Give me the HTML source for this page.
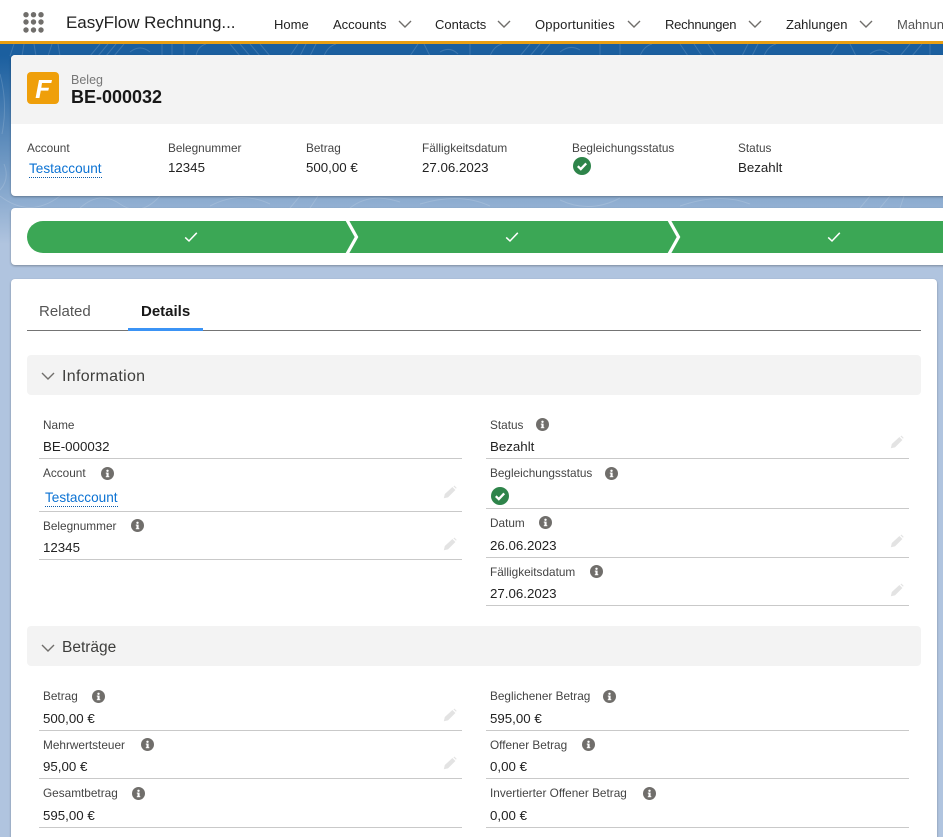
<!DOCTYPE html>
<html lang="de">
<head>
<meta charset="utf-8">
<title>BE-000032</title>
<style>
html,body{margin:0;padding:0;width:943px;height:837px;overflow:hidden}
body{background:#b0c4df;font-family:"Liberation Sans",sans-serif;color:#181818}
#w{position:relative;width:943px;height:837px;overflow:hidden;background:#b0c4df}
.t,.a,svg.a{position:absolute}
.t{white-space:nowrap;line-height:18px}
.l{font-size:11.8px;color:#444}
.v{font-size:13.3px;color:#222;margin-top:1px}
.n{font-size:13px;color:#222;top:16px}
.card{position:absolute;background:#fff;border-radius:4px;box-shadow:0 1px 2px rgba(0,0,0,.3)}
.bar{position:absolute;left:27px;width:894px;height:40px;background:#f3f3f3;border-radius:4px}
.ln{position:absolute;height:1px;background:#c9c9c9}
.lk{color:#0b72d3;font-size:13.6px;margin-top:1px}
</style>
</head>
<body>
<div id="w">
<svg width="0" height="0" style="position:absolute">
<defs>
<symbol id="i" viewBox="0 0 13 13"><circle cx="6.5" cy="6.5" r="6.5" fill="#706e6b"/><rect x="5.5" y="5.6" width="2.1" height="4.4" fill="#fff"/><rect x="4.8" y="5.6" width="1.5" height="1" fill="#fff"/><rect x="4.8" y="9.2" width="3.5" height="1" fill="#fff"/><circle cx="6.5" cy="3.8" r="1.2" fill="#fff"/></symbol>
<symbol id="p" viewBox="0 0 14 14"><path d="M0.8 13.2 L1.8 9 L9.4 2 L12.4 5 L5 12.4 Z M10.4 1.2 L11.4 0.6 L13.6 2.8 L13 3.8 Z" fill="#e3e3e3"/></symbol>
<symbol id="c" viewBox="0 0 18 18"><circle cx="9" cy="9" r="9" fill="#2e844a"/><path d="M4.8 9.2 L7.8 12.1 L13.2 6.4" fill="none" stroke="#fff" stroke-width="2.3"/></symbol>
<symbol id="d" viewBox="0 0 14 8"><path d="M1 1 L7 7 L13 1" fill="none" stroke="#706e6b" stroke-width="1.4"/></symbol>
<symbol id="k" viewBox="0 0 14 12"><path d="M1.2 6.4 L5 10 L12.8 1.8" fill="none" stroke="#fff" stroke-width="1.5"/></symbol>
</defs>
</svg>

<!-- backdrop -->
<div class="a" style="left:0;top:44px;width:943px;height:200px;background:linear-gradient(180deg,#1b5f9f 0,#1b5f9f 6%,#b0c4df 100%)"></div>
<svg class="a" style="left:0;top:44px" width="943" height="200" fill="none" stroke="#fff" stroke-opacity=".15" stroke-width="1">
<path d="M10 12 L14 0 M22 12 L24 0 M36 12 L34 0 M48 12 L52 0 M60 12 L58 0 M90 12 L100 0 M98 12 L108 0 M106 12 L116 0 M114 12 L124 0 M130 8 Q140 0 150 8 M162 12 V0 M172 12 V0 M184 12 V0 M196 12 Q198 2 206 0 M230 0 L240 12 M240 0 L250 12 M250 0 L260 12 M260 0 L270 12 M290 12 L298 0 M300 12 L306 0 M310 12 L316 0 M324 12 Q328 2 336 0 M410 12 L418 0 M424 0 L430 12 M440 8 Q450 2 458 10 M470 12 V0 M490 12 Q494 2 502 0 M520 12 L530 0 M530 12 L540 0 M540 12 L550 0 M560 8 Q570 0 580 6 M600 12 V0 M620 12 V0 M640 12 Q644 2 652 0 M680 0 L688 12 M694 0 L702 12 M708 0 L716 12 M742 12 L748 0 M752 12 L758 0 M764 12 Q768 2 776 0 M830 12 L838 0 M850 0 L856 12 M870 10 Q880 2 890 10 M900 12 L910 0 M912 12 L922 0 M930 12 V0"/>
<path d="M0 152 Q30 175 60 152 M80 164 Q100 146 120 160 T160 152 M210 162 Q240 146 270 160 M290 164 L300 152 M310 164 L318 152 M350 164 Q370 148 400 158 M420 160 Q460 148 490 162 M560 156 Q590 170 620 154 M680 162 Q720 148 750 160 M860 164 L870 152 M880 164 L890 152 M900 164 L904 152"/>
<path d="M0 30 Q8 60 2 90 M4 120 Q10 135 0 146"/>
</svg>

<!-- top nav -->
<div class="a" style="left:0;top:0;width:943px;height:41px;background:#fff"></div>
<div class="a" style="left:0;top:41px;width:943px;height:3px;background:#e99f12"></div>
<svg class="a" style="left:22px;top:12px" width="24" height="22" fill="#706e6b">
<circle cx="4" cy="2.7" r="2.7"/><circle cx="11.5" cy="2.7" r="2.7"/><circle cx="19" cy="2.7" r="2.7"/>
<circle cx="4" cy="10" r="2.7"/><circle cx="11.5" cy="10" r="2.7"/><circle cx="19" cy="10" r="2.7"/>
<circle cx="4" cy="18" r="2.7"/><circle cx="11.5" cy="18" r="2.7"/><circle cx="19" cy="18" r="2.7"/>
</svg>
<div class="t" style="left:66px;top:14px;font-size:17px;letter-spacing:-.03px;color:#222">EasyFlow Rechnung...</div>
<div class="t n" style="left:274px">Home</div>
<div class="t n" style="left:333px">Accounts</div>
<svg class="a" style="left:398px;top:20px" width="14" height="8"><use href="#d"/></svg>
<div class="t n" style="left:435px">Contacts</div>
<svg class="a" style="left:497px;top:20px" width="14" height="8"><use href="#d"/></svg>
<div class="t n" style="left:535px;letter-spacing:.2px">Opportunities</div>
<svg class="a" style="left:627px;top:20px" width="14" height="8"><use href="#d"/></svg>
<div class="t n" style="left:665px;letter-spacing:-.25px">Rechnungen</div>
<svg class="a" style="left:748px;top:20px" width="14" height="8"><use href="#d"/></svg>
<div class="t n" style="left:786px">Zahlungen</div>
<svg class="a" style="left:859px;top:20px" width="14" height="8"><use href="#d"/></svg>
<div class="t n" style="left:897px;color:#555">Mahnungen</div>

<!-- record header -->
<div class="card" style="left:11px;top:55px;width:940px;height:141px;overflow:hidden">
<div class="a" style="left:0;top:0;width:940px;height:69px;background:#f3f3f3"></div>
</div>
<svg class="a" style="left:27px;top:72px" width="32" height="32"><rect width="32" height="32" rx="4" fill="#ef9f0a"/><path d="M12 8 H25 L24.3 11 H15 L14.3 15.8 H22 L21.3 18.6 H13.8 L12.4 26 H8.6 Z" fill="#fff"/></svg>
<div class="t" style="left:71px;top:71px;font-size:12.5px;color:#777">Beleg</div>
<div class="t" style="left:71px;top:88px;font-size:18px;font-weight:bold;color:#181818">BE-000032</div>

<div class="t l" style="left:27px;top:139px">Account</div>
<div class="t l" style="left:168px;top:139px">Belegnummer</div>
<div class="t l" style="left:306px;top:139px">Betrag</div>
<div class="t l" style="left:422px;top:139px">Fälligkeitsdatum</div>
<div class="t l" style="left:572px;top:139px">Begleichungsstatus</div>
<div class="t l" style="left:738px;top:139px">Status</div>
<div class="t lk" style="left:29px;top:159px;border-bottom:1px dotted #0b5cab;line-height:17px">Testaccount</div>
<div class="t v" style="left:168px;top:158px">12345</div>
<div class="t v" style="left:306px;top:158px">500,00 €</div>
<div class="t v" style="left:422px;top:158px">27.06.2023</div>
<svg class="a" style="left:573px;top:157px" width="18" height="18"><use href="#c"/></svg>
<div class="t v" style="left:738px;top:158px">Bezahlt</div>

<!-- path -->
<div class="card" style="left:11px;top:208px;width:940px;height:57px"></div>
<svg class="a" style="left:27px;top:221px" width="916" height="32">
<path d="M16 0 H916 V32 H16 A16 16 0 0 1 16 0 Z" fill="#3ba755"/>
<path d="M320 -1 L329.5 16 L320 33 M642 -1 L651.5 16 L642 33" fill="none" stroke="#fff" stroke-width="3.2"/>
</svg>
<svg class="a" style="left:184px;top:231px" width="14" height="12"><use href="#k"/></svg>
<svg class="a" style="left:505px;top:231px" width="14" height="12"><use href="#k"/></svg>
<svg class="a" style="left:827px;top:231px" width="14" height="12"><use href="#k"/></svg>

<!-- main card -->
<div class="card" style="left:11px;top:279px;width:926px;height:570px"></div>
<div class="t" style="left:39px;top:303px;font-size:15px;color:#555">Related</div>
<div class="t" style="left:141px;top:303px;font-size:15px;font-weight:bold;color:#181818">Details</div>
<div class="a" style="left:27px;top:330px;width:894px;height:1px;background:#747474"></div>
<div class="a" style="left:128px;top:328px;width:75px;height:3px;background:#3b93f5"></div>

<!-- Information -->
<div class="bar" style="top:355px"></div>
<svg class="a" style="left:41px;top:372px" width="14" height="8"><use href="#d"/></svg>
<div class="t" style="left:62px;top:368px;font-size:16px;letter-spacing:.3px;color:#3e3e3c">Information</div>

<div class="t l" style="left:43px;top:416px">Name</div>
<div class="t v" style="left:43px;top:437px">BE-000032</div>
<div class="ln" style="left:39px;top:458px;width:423px"></div>
<div class="t l" style="left:43px;top:464px">Account</div>
<svg class="a" style="left:100.5px;top:466.5px" width="13" height="13"><use href="#i"/></svg>
<div class="t lk" style="left:45px;top:488px;border-bottom:1px dotted #0b5cab;line-height:17px">Testaccount</div>
<svg class="a" style="left:443px;top:485px" width="14" height="14"><use href="#p"/></svg>
<div class="ln" style="left:39px;top:511px;width:423px"></div>
<div class="t l" style="left:43px;top:517px">Belegnummer</div>
<svg class="a" style="left:130.5px;top:518.5px" width="13" height="13"><use href="#i"/></svg>
<div class="t v" style="left:43px;top:538px">12345</div>
<svg class="a" style="left:443px;top:537px" width="14" height="14"><use href="#p"/></svg>
<div class="ln" style="left:39px;top:559px;width:423px"></div>

<div class="t l" style="left:490px;top:416px">Status</div>
<svg class="a" style="left:535.5px;top:417.5px" width="13" height="13"><use href="#i"/></svg>
<div class="t v" style="left:490px;top:437px">Bezahlt</div>
<svg class="a" style="left:890px;top:435px" width="14" height="14"><use href="#p"/></svg>
<div class="ln" style="left:486px;top:458px;width:423px"></div>
<div class="t l" style="left:490px;top:464px">Begleichungsstatus</div>
<svg class="a" style="left:604.5px;top:466.5px" width="13" height="13"><use href="#i"/></svg>
<svg class="a" style="left:491px;top:487px" width="18" height="18"><use href="#c"/></svg>
<div class="ln" style="left:486px;top:508px;width:423px"></div>
<div class="t l" style="left:490px;top:514px">Datum</div>
<svg class="a" style="left:538.5px;top:515.5px" width="13" height="13"><use href="#i"/></svg>
<div class="t v" style="left:490px;top:536px">26.06.2023</div>
<svg class="a" style="left:890px;top:534px" width="14" height="14"><use href="#p"/></svg>
<div class="ln" style="left:486px;top:557px;width:423px"></div>
<div class="t l" style="left:490px;top:563px">Fälligkeitsdatum</div>
<svg class="a" style="left:589.5px;top:564.5px" width="13" height="13"><use href="#i"/></svg>
<div class="t v" style="left:490px;top:584px">27.06.2023</div>
<svg class="a" style="left:890px;top:583px" width="14" height="14"><use href="#p"/></svg>
<div class="ln" style="left:486px;top:605px;width:423px"></div>

<!-- Beträge -->
<div class="bar" style="top:626px"></div>
<svg class="a" style="left:41px;top:644px" width="14" height="8"><use href="#d"/></svg>
<div class="t" style="left:62px;top:639px;font-size:15.5px;color:#3e3e3c">Beträge</div>

<div class="t l" style="left:43px;top:687px">Betrag</div>
<svg class="a" style="left:91.5px;top:689.5px" width="13" height="13"><use href="#i"/></svg>
<div class="t v" style="left:43px;top:709px">500,00 €</div>
<svg class="a" style="left:443px;top:708px" width="14" height="14"><use href="#p"/></svg>
<div class="ln" style="left:39px;top:730px;width:423px"></div>
<div class="t l" style="left:43px;top:736px">Mehrwertsteuer</div>
<svg class="a" style="left:140.5px;top:737.5px" width="13" height="13"><use href="#i"/></svg>
<div class="t v" style="left:43px;top:757px">95,00 €</div>
<svg class="a" style="left:443px;top:756px" width="14" height="14"><use href="#p"/></svg>
<div class="ln" style="left:39px;top:778px;width:423px"></div>
<div class="t l" style="left:43px;top:784px">Gesamtbetrag</div>
<svg class="a" style="left:131.5px;top:786.5px" width="13" height="13"><use href="#i"/></svg>
<div class="t v" style="left:43px;top:806px">595,00 €</div>
<div class="ln" style="left:39px;top:827px;width:423px"></div>

<div class="t l" style="left:490px;top:687px">Beglichener Betrag</div>
<svg class="a" style="left:602.5px;top:689.5px" width="13" height="13"><use href="#i"/></svg>
<div class="t v" style="left:490px;top:709px">595,00 €</div>
<div class="ln" style="left:486px;top:730px;width:423px"></div>
<div class="t l" style="left:490px;top:736px">Offener Betrag</div>
<svg class="a" style="left:581.5px;top:737.5px" width="13" height="13"><use href="#i"/></svg>
<div class="t v" style="left:490px;top:757px">0,00 €</div>
<div class="ln" style="left:486px;top:778px;width:423px"></div>
<div class="t l" style="left:490px;top:784px">Invertierter Offener Betrag</div>
<svg class="a" style="left:642.5px;top:786.5px" width="13" height="13"><use href="#i"/></svg>
<div class="t v" style="left:490px;top:806px">0,00 €</div>
<div class="ln" style="left:486px;top:827px;width:423px"></div>
</div>
</body>
</html>
